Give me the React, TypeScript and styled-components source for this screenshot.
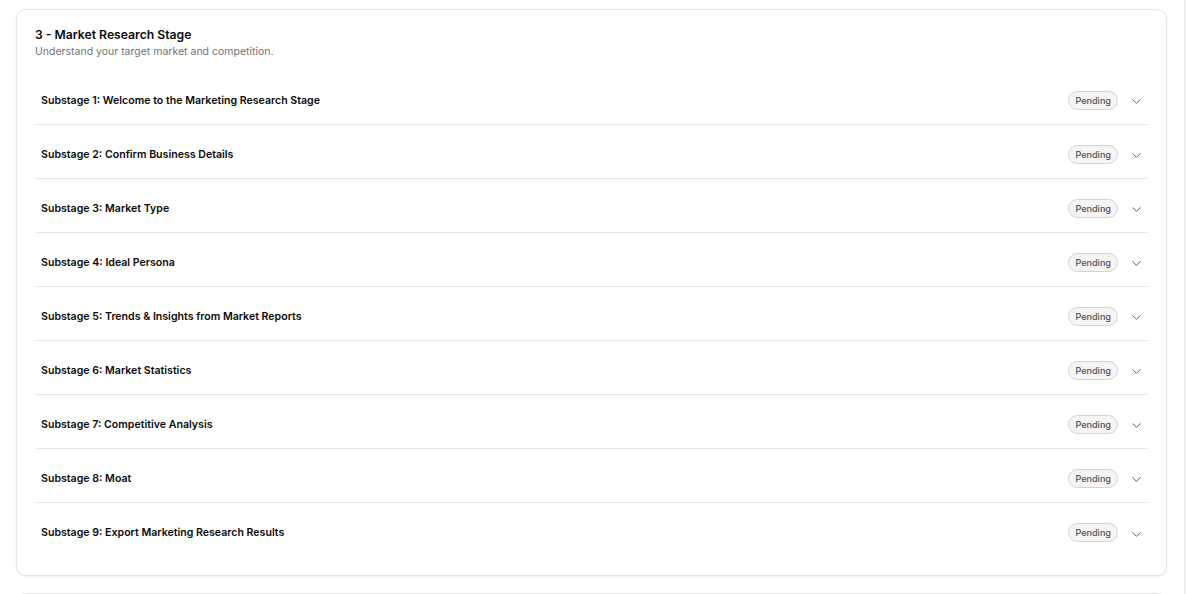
import React from "react";
import styled, { createGlobalStyle } from "styled-components";
import { ChevronDown } from "lucide-react";

const Global = createGlobalStyle`
  html, body { margin: 0; padding: 0; background: #ffffff; }
  body { font-family: Inter, "Noto Sans", sans-serif; color: #0a0a0a; }
  * { box-sizing: border-box; }
`;

const Page = styled.div`
  display: flex;
  width: 1186px;
  height: 594px;
  overflow: hidden;
`;

const Main = styled.main`
  flex: 1;
  padding: 9px 17px 0 16px;
  display: flex;
  flex-direction: column;
  gap: 17px;
`;

const Aside = styled.aside`
  width: 2px;
  flex-shrink: 0;
  border-left: 1px solid #e5e5e5;
`;

const Card = styled.section`
  border: 1px solid #e5e5e5;
  border-radius: 10px;
  background: #ffffff;
  box-shadow: 0 1px 3px rgba(0, 0, 0, 0.07);
  padding: 16px 18px 18px;
  flex-shrink: 0;
`;

const Title = styled.h2`
  margin: 0;
  font-size: 12.2px;
  line-height: 18px;
  font-weight: 600;
  color: #0a0a0a;
`;

const Subtitle = styled.p`
  margin: 0;
  font-size: 10.5px;
  line-height: 16px;
  color: #737373;
`;

const List = styled.div`
  margin-top: 11px;
  display: flex;
  flex-direction: column;
`;

const Row = styled.div<{ $last?: boolean }>`
  height: 54px;
  display: flex;
  align-items: center;
  padding: 5px 4px 0 6px;
  border-bottom: ${(p) => (p.$last ? "none" : "1px solid #e5e5e5")};
`;

const RowTitle = styled.span`
  flex: 1;
  font-size: 10.6px;
  font-weight: 600;
  color: #0a0a0a;
`;

const Badge = styled.span`
  display: inline-flex;
  align-items: center;
  height: 19px;
  padding: 0 6px;
  border-radius: 999px;
  border: 1px solid #d4d4d4;
  background: #f5f5f4;
  font-size: 9.1px;
  font-weight: 500;
  color: #525252;
`;

const Chevron = styled(ChevronDown)`
  margin-left: 11px;
  margin-top: 3px;
  color: #525252;
`;

const NextCard = styled.div`
  height: 20px;
  border: 1px solid #e5e5e5;
  border-radius: 10px;
  flex-shrink: 0;
`;

const substages = [
  "Welcome to the Marketing Research Stage",
  "Confirm Business Details",
  "Market Type",
  "Ideal Persona",
  "Trends & Insights from Market Reports",
  "Market Statistics",
  "Competitive Analysis",
  "Moat",
  "Export Marketing Research Results",
];

export default function App() {
  return (
    <>
      <Global />
      <Page>
        <Main>
          <Card>
            <Title>3 - Market Research Stage</Title>
            <Subtitle>Understand your target market and competition.</Subtitle>
            <List>
              {substages.map((s, i) => (
                <Row key={s} $last={i === substages.length - 1}>
                  <RowTitle>
                    Substage {i + 1}: {s}
                  </RowTitle>
                  <Badge>Pending</Badge>
                  <Chevron size={15} strokeWidth={1.5} />
                </Row>
              ))}
            </List>
          </Card>
          <NextCard />
        </Main>
        <Aside />
      </Page>
    </>
  );
}
